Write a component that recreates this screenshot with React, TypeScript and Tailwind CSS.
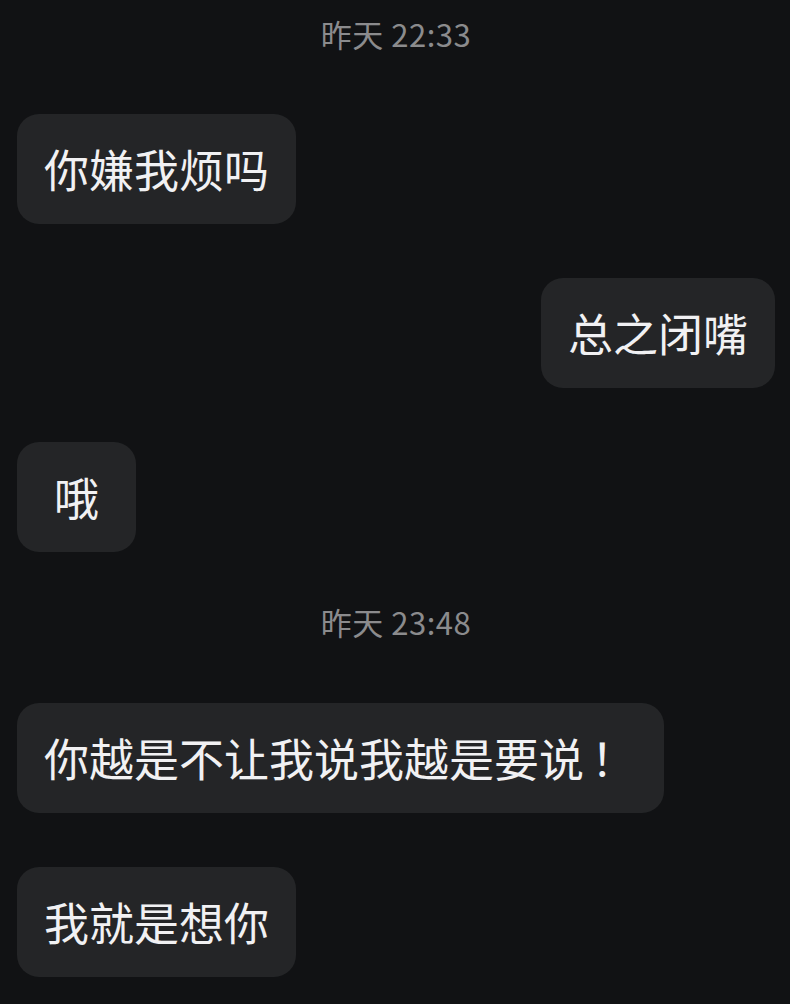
import React from 'react';

type Item =
  | { kind: 'time'; text: string; gap: string }
  | { kind: 'msg'; text: string; mine?: boolean; gap: string };

const items: Item[] = [
  { kind: 'time', text: '昨天 22:33', gap: 'mt-[14px]' },
  { kind: 'msg', text: '你嫌我烦吗', gap: 'mt-[60px]' },
  { kind: 'msg', text: '总之闭嘴', mine: true, gap: 'mt-[54px]' },
  { kind: 'msg', text: '哦', gap: 'mt-[54px]' },
  { kind: 'time', text: '昨天 23:48', gap: 'mt-[50px]' },
  { kind: 'msg', text: '你越是不让我说我越是要说！', gap: 'mt-[61px]' },
  { kind: 'msg', text: '我就是想你', gap: 'mt-[54px]' },
];

// the full-width "！" sits a little wider in the original
const renderText = (text: string) => {
  if (!text.endsWith('！')) return text;
  return (
    <>
      {text.slice(0, -1)}
      <span className="inline-block w-[53px] pl-[7px] text-left">！</span>
    </>
  );
};

const App = () => {
  return (
    <div
      className="min-h-screen w-full flex flex-col bg-[#111214] pl-[17px] pr-[15px] pb-8"
      style={{ fontFamily: '"Noto Sans CJK SC", "Noto Sans", sans-serif' }}
    >
      {items.map((item, i) =>
        item.kind === 'time' ? (
          <div
            key={i}
            className={`${item.gap} h-[40px] leading-[40px] text-center text-[31px] tracking-[0.5px] text-[#8b8b8d]`}
          >
            {item.text}
          </div>
        ) : (
          <div key={i} className={`${item.gap} flex ${item.mine ? 'justify-end' : 'justify-start'}`}>
            <div className="min-w-[119px] h-[110px] px-[27px] rounded-[22px] bg-[#242527] text-[#f1f1f3] text-[45px] leading-[110px] text-center whitespace-nowrap">
              {renderText(item.text)}
            </div>
          </div>
        )
      )}
    </div>
  );
};

export default App;
